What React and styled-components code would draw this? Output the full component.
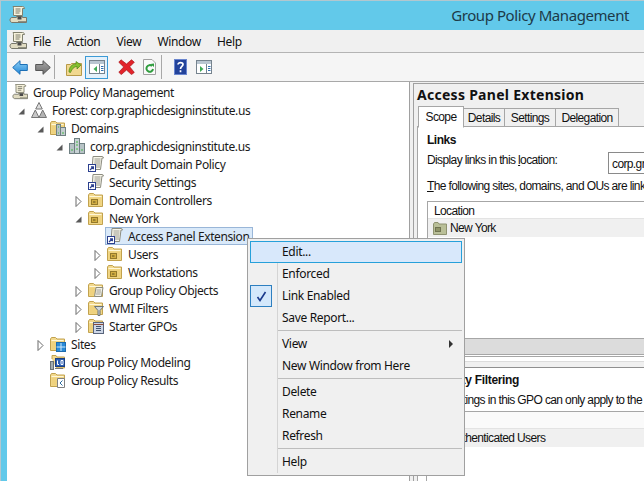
import React from "react";
import styled, { createGlobalStyle } from "styled-components";

const Global = createGlobalStyle`
  html, body { margin: 0; padding: 0; background: #fff; overflow: hidden; }
  * { box-sizing: border-box; }
`;

const Win = styled.div`
  width: 644px; height: 481px; display: flex; flex-direction: column;
  background: #62c9ea; border-top: 1px solid #b3c7cf; border-left: 1px solid #b3c7cf;
  overflow: hidden; font-family: "Noto Sans", "Open Sans", sans-serif; font-size: 12px; letter-spacing: -0.33px; color: #1a1a1a; position: relative;
`;
const TitleBar = styled.div`
  height: 29px; flex: none; display: flex; align-items: center; justify-content: space-between;
  padding: 0 15px 1px 8px;
`;
const TitleText = styled.span`font-size: 15px; letter-spacing: -0.42px; color: #1d3a48;`;
const Body = styled.div`
  flex: 1; min-height: 0; margin-left: 6px; background: #f0f0f0; display: flex; flex-direction: column;
`;
const MenuBar = styled.div`
  height: 23px; flex: none; display: flex; align-items: center; padding-left: 2px; gap: 16px; border-bottom: 1px solid #b4b4b4;
  & > svg { margin-right: -10px; }
`;
const MenuLabel = styled.span`color: #111;`;
const Toolbar = styled.div`
  height: 29px; flex: none; display: flex; align-items: center; padding-left: 1px; background: #f5f5f5; border-bottom: 1px solid #a8a8a8;
`;
const ToolBtn = styled.div`
  width: 23px; height: 23px; display: flex; align-items: center; justify-content: center; flex: none;
  border: 1px solid ${p => (p.$active ? "#3c9bd6" : "transparent")};
  background: ${p => (p.$active ? "#e4f1fb" : "transparent")};
`;
const ToolSep = styled.div`width: 1px; height: 24px; background: #a8a8a8; margin-right: 7px; flex: none;`;
const ToolGap = styled.div`width: 7px; flex: none;`;
const Content = styled.div`flex: 1; min-height: 0; display: flex; background: #f0f0f0;`;
const TreePane = styled.div`
  width: 403px; flex: none; background: #fff; padding-top: 1px; border-right: 1px solid #a0a0a0; overflow: hidden; letter-spacing: -0.39px;
`;
const Row = styled.div`
  height: 18px; display: flex; align-items: center; white-space: nowrap; padding-left: ${p => 5 + p.$d * 19}px;
`;
const RowInner = styled.div`
  display: flex; align-items: center; gap: 5px; height: 18px;
  padding: 0 ${p => (p.$sel ? 3 : 0)}px 0 ${p => (p.$sel ? 1 : 0)}px;
  margin-left: ${p => (p.$sel ? -2 : 0)}px;
  background: ${p => (p.$sel ? "#d9e9f9" : "transparent")};
  border: ${p => (p.$sel ? "1px solid #99b6d8" : "none")};
`;
const Exp = styled.span`
  width: 14px; margin-left: -17px; margin-right: 3px; flex: none; display: flex; justify-content: center; padding-top: 2px;
`;
const RightPane = styled.div`
  flex: 1; min-width: 0; margin: 1px 0 0 3px; border-left: 1px solid #a0a0a0; border-top: 1px solid #a0a0a0; background: #f0f0f0;
  display: flex; flex-direction: column; overflow: hidden; font-family: "Liberation Sans", Arial, sans-serif; color: #111; letter-spacing: -0.62px;
`;
const PaneTitle = styled.div`
  height: 22px; flex: none; padding: 2px 0 0 3px; font-family: "Noto Sans", sans-serif; font-weight: 700; font-size: 14px; letter-spacing: 0.28px; line-height: 18px; color: #111; white-space: nowrap;
`;
const Tabs = styled.div`display: flex; height: 21px; flex: none; padding-left: 4px; align-items: flex-start; position: relative; z-index: 1;`;
const Tab = styled.div`
  height: ${p => (p.$on ? 22 : 19)}px; width: ${p => p.$w}px; flex: none; border: 1px solid #a6a6a6;
  margin: ${p => (p.$on ? "0" : "2px 0 0 -1px")};
  border-bottom: ${p => (p.$on ? "1px solid #fff" : "1px solid #a6a6a6")};
  background: ${p => (p.$on ? "#fff" : "#f0f0f0")}; display: flex; align-items: center; justify-content: center; padding-top: ${p => (p.$on ? 0 : 1)}px;
`;
const TabBody = styled.div`
  margin: -1px 0 0 3px; flex: 1; min-height: 0; background: #fff; border-left: 1px solid #a6a6a6; border-top: 1px solid #a6a6a6; padding: 6px 0 0 9px; white-space: nowrap;
  display: flex; flex-direction: column; overflow: hidden;
`;
const Bold = styled.div`font-weight: 700; height: 15px; line-height: 14px; letter-spacing: -0.5px; flex: none;`;
const LinkLoc = styled.div`display: flex; height: 25px; flex: none; margin-top: 3px; align-items: flex-start;`;
const LinkLabel = styled.span`width: 181px; flex: none; margin-top: 2px; line-height: 14px;`;
const Combo = styled.div`
  width: 60px; height: 22px; flex: none; margin-top: 1px; border: 1px solid #8a8a8a; padding: 4px 0 0 3px; overflow: hidden; line-height: 14px;
`;
const Plain = styled.div`height: 18px; flex: none; margin-top: 1px; line-height: 18px;`;
const ListBox = styled.div`
  margin-top: 6px; height: 156px; flex: none; border: 1px solid #a6a6a6; border-right: none; background: #fff; padding-bottom: 1px; display: flex; flex-direction: column;
`;
const ListHead = styled.div`height: 17px; flex: none; border-bottom: 1px solid #e3e3e3; padding-left: 6px; line-height: 18px;`;
const ListRow = styled.div`height: 18px; flex: none; background: #f0f0f0; display: flex; align-items: center; gap: 3px; padding-left: 5px;`;
const GrayBar = styled.div`
  height: 17px; flex: none; margin-top: auto; background: #dcdcdc; border-top: 1px solid #a6a6a6; border-bottom: 1px solid #a6a6a6;
`;
const Splitter = styled.div`
  height: 6px; flex: none; margin: 4px 0 0 -1px; background: #f0f0f0; border-top: 1px solid #dcdcdc;
`;
const SecPanel = styled.div`
  flex: 1; margin-left: -1px; border-top: 1px solid #8f8f8f; border-left: 1px solid #a6a6a6; background: #fff; display: flex; flex-direction: column; padding-top: 4px; white-space: nowrap;
`;
const SecTitle = styled.div`font-weight: 700; font-size: 12px; letter-spacing: -0.33px; height: 16px; line-height: 16px;`;
const SecNote = styled.div`height: 16px; line-height: 16px; margin-top: 4px;`;
const SecHead = styled.div`height: 18px; margin-top: 3px; border-top: 1px solid #a6a6a6; background: #fafafa; border-bottom: 1px solid #e3e3e3;`;
const SecRow = styled.div`height: 18px; background: #f0f0f0; line-height: 19px; padding-left: 22px;`;
const Menu = styled.div`
  position: absolute; left: 246px; top: 237px; width: 218px; height: 238px; padding: 2px; background: #f0f0f0; border: 1px solid #a0a0a0; color: #111; letter-spacing: -0.33px;
  &::before { content: ""; position: absolute; left: 29px; top: 24px; bottom: 2px; width: 1px; background: #d4d4d4; }
`;
const Item = styled.div`
  height: 22px; padding-left: 31px; display: flex; align-items: center; justify-content: space-between; position: relative; border: 1px solid ${p => (p.$hot ? "#26a0da" : "transparent")};
  background: ${p => (p.$hot ? "#d8e8fb" : "transparent")};
  line-height: 20px;
`;
const CheckBox = styled.span`
  position: absolute; left: -1px; top: -1px; width: 22px; height: 22px; border: 1px solid #2d7fc0; background: #d4e8fb; display: flex; align-items: center; justify-content: center;
`;
const Sub = styled.span`width: 0; height: 0; border-left: 4px solid #333; border-top: 4px solid transparent; border-bottom: 4px solid transparent; margin-right: 8px;`;
const MenuSep = styled.div`height: 4px; padding: 1px 0 0 28px;`;
const MenuLine = styled.div`height: 1px; background: #bdbdbd;`;

const Scroll = ({ s = 18 }) => (
  <svg width={s} height={s} viewBox="0 0 18 18">
    <path d="M4 .5h9.500c1.300 0 2 1 2 2h-2v7H4.500V2.500C4.500 1.500 4.300 .8 4 .5z" fill="#f7f2dc" stroke="#80806e" />
    <path d="M6.500 3h5M6.500 5h5M6.500 7h4" stroke="#7a7a6a" />
    <path d="M1 14c0-1.300.8-2.500 2-2.500h4.500v-1h6v1h4v5H3c-1 0-2-1.200-2-2.500z" fill="#e1dcc2" stroke="#77776a" />
    <path d="M8.500 10.500h4v3h-4z" fill="#4a4a4a" />
    <path d="M9 15.500h8" stroke="#8f8f80" />
  </svg>
);
const Forest = () => (
  <svg width="16" height="16" viewBox="0 0 16 16">
    <path d="M8 .5l3.300 6.500H4.700z" fill="#dcdcdc" stroke="#777" />
    <path d="M4.300 8l3.700 7.500H.5z" fill="#c8c8c8" stroke="#777" />
    <path d="M11.700 8l3.800 7.500H8z" fill="#b4b4b4" stroke="#777" />
  </svg>
);
const Folder = ({ children }) => (
  <svg width="16" height="16" viewBox="0 0 16 16">
    <path d="M.5 14.500V3L1.500 1.500h4L7 3h7.500v11.500z" fill="#f2d98e" stroke="#c2a24e" />
    <path d="M1.500 4.500h12" stroke="#fff7d8" />
    <path d="M1.500 5.500h12v8h-12z" fill="#efd27e" />
    {children}
  </svg>
);
const OU = () => (
  <Folder>
    <rect x="3.500" y="7.500" width="6" height="5" fill="#d3ae42" stroke="#94792a" />
    <path d="M5 10h2.500" stroke="#5e5020" />
  </Folder>
);
const DomainsIcon = () => (
  <Folder>
    <rect x="6.500" y="4.500" width="4" height="11" fill="#b7c3c6" stroke="#6f8082" />
    <rect x="10.500" y="7.500" width="5" height="8" fill="#c5ced0" stroke="#6f8082" />
    <path d="M8 13h1M12 13h2M8 7h1" stroke="#46b946" />
  </Folder>
);
const Domain = () => (
  <svg width="16" height="16" viewBox="0 0 16 16">
    <rect x=".5" y="5.500" width="5" height="10" fill="#b7c3c6" stroke="#6f8082" />
    <rect x="5.500" y=".5" width="5" height="15" fill="#c7d1d4" stroke="#6f8082" />
    <rect x="10.500" y="5.500" width="5" height="10" fill="#b7c3c6" stroke="#6f8082" />
    <path d="M2 12h2M7 11h2M12 12h2M7 4h2M7 7h2" stroke="#46b946" />
  </svg>
);
const Gpo = () => (
  <svg width="16" height="16" viewBox="0 0 16 16">
    <path d="M5 .5h9c1 0 1.500.5 1.500 1.500h-1.500L12.500 13.500H4z" fill="#f8f6ea" stroke="#8c8c80" />
    <path d="M6.500 3h6M6.500 5h6M6.300 7h6M6 9h6M8 11h4" stroke="#9a9a90" />
    <rect x=".5" y="8.500" width="7" height="7" fill="#fff" stroke="#2b3f8e" />
    <path d="M2 14l3-3M3 10.800h2.400v2.400" stroke="#2b3f8e" fill="none" strokeWidth="1.200" />
  </svg>
);
const GpoFolder = () => (
  <Folder>
    <path d="M8 5.500h7l-1.500 9H6.500z" fill="#f3f1e4" stroke="#8c8c80" />
    <path d="M8.500 8h4.500M8.500 10h4.500M8 12h4.500" stroke="#a0a098" />
  </Folder>
);
const Wmi = () => (
  <Folder>
    <path d="M6.500 6.500h9l-3.500 4v5h-2v-5z" fill="#cfd6da" stroke="#6b7478" />
  </Folder>
);
const Starter = () => (
  <Folder>
    <rect x="5.500" y="4.500" width="10" height="11" fill="#cdd6e6" stroke="#59657c" />
    <path d="M5.500 6.500h10" stroke="#8a4b3a" />
    <path d="M8 8.500h5M8 10.500h5M8 12.500h5" stroke="#42536f" />
  </Folder>
);
const Sites = () => (
  <Folder>
    <rect x="6.500" y="6.500" width="9" height="9" fill="#2a8bd8" stroke="#1e6cae" />
    <path d="M11 7v8M6.500 11h9" stroke="#cfe9fb" />
  </Folder>
);
const Modeling = () => (
  <svg width="16" height="16" viewBox="0 0 16 16">
    <path d="M2 5V1.500h4l1 1.500h7.500v11H6" fill="#f2d98e" stroke="#c2a24e" />
    <rect x=".5" y="7.500" width="3" height="8" fill="#a4adb0" stroke="#6a7275" />
    <rect x="5.500" y="4.500" width="9" height="8" fill="#2b5fb3" stroke="#1c3f80" />
    <path d="M7.500 6.500v4h1.500M11 6.500h2v4h-2z" stroke="#fff" fill="none" />
    <path d="M5 14.500h8" stroke="#777" />
  </svg>
);
const Results = () => (
  <Folder>
    <path d="M7.500 6.500h7v9h-7z" fill="#fff" stroke="#808080" />
    <path d="M12.500 8.500L10 11l2.500 2.500" stroke="#2b6b9e" fill="none" />
  </Folder>
);

const Arrow = ({ open }) => (
  <Exp>
    {open ? (
      <svg width="7" height="7" viewBox="0 0 7 7"><path d="M6.500 .5v6H.5z" fill="#595959" /></svg>
    ) : (
      <svg width="7" height="11" viewBox="0 0 7 11"><path d="M1 .5L6 5.500 1 10.500z" fill="#fff" stroke="#6a6a6a" /></svg>
    )}
  </Exp>
);

const TreeRow = ({ d, exp, icon, label, sel }) => (
  <Row $d={d}>
    {exp && <Arrow open={exp === "open"} />}
    <RowInner $sel={sel}>{icon}<span>{label}</span></RowInner>
  </Row>
);

const rows = [
  { d: 0, icon: <Scroll s={16} />, label: "Group Policy Management" },
  { d: 1, exp: "open", icon: <Forest />, label: "Forest: corp.graphicdesigninstitute.us" },
  { d: 2, exp: "open", icon: <DomainsIcon />, label: "Domains" },
  { d: 3, exp: "open", icon: <Domain />, label: "corp.graphicdesigninstitute.us" },
  { d: 4, icon: <Gpo />, label: "Default Domain Policy" },
  { d: 4, icon: <Gpo />, label: "Security Settings" },
  { d: 4, exp: "closed", icon: <OU />, label: "Domain Controllers" },
  { d: 4, exp: "open", icon: <OU />, label: "New York" },
  { d: 5, icon: <Gpo />, label: "Access Panel Extension", sel: true },
  { d: 5, exp: "closed", icon: <OU />, label: "Users" },
  { d: 5, exp: "closed", icon: <OU />, label: "Workstations" },
  { d: 4, exp: "closed", icon: <GpoFolder />, label: "Group Policy Objects" },
  { d: 4, exp: "closed", icon: <Wmi />, label: "WMI Filters" },
  { d: 4, exp: "closed", icon: <Starter />, label: "Starter GPOs" },
  { d: 2, exp: "closed", icon: <Sites />, label: "Sites" },
  { d: 2, icon: <Modeling />, label: "Group Policy Modeling" },
  { d: 2, icon: <Results />, label: "Group Policy Results" },
];

const Back = () => (
  <svg width="16" height="15" viewBox="0 0 16 15">
    <defs>
      <linearGradient id="bk" x1="0" y1="0" x2="0" y2="1">
        <stop offset="0" stopColor="#8fd0f5" />
        <stop offset="1" stopColor="#1f86d8" />
      </linearGradient>
    </defs>
    <path d="M.7 7.500L8 .7v3.800h7.300v6H8v3.800z" fill="url(#bk)" stroke="#1c6fb6" />
  </svg>
);
const Fwd = () => (
  <svg width="16" height="15" viewBox="0 0 16 15">
    <defs>
      <linearGradient id="fw" x1="0" y1="0" x2="0" y2="1">
        <stop offset="0" stopColor="#a8a8a8" />
        <stop offset="1" stopColor="#6c6c6c" />
      </linearGradient>
    </defs>
    <path d="M15.300 7.500L8 .7v3.800H.7v6H8v3.800z" fill="url(#fw)" stroke="#555" />
  </svg>
);
const Up = () => (
  <svg width="16" height="17" viewBox="0 0 16 17">
    <path d="M.5 16.500V5.500h4l1-1h10v12z" fill="#f1d88f" stroke="#b89a48" />
    <path d="M3 13c0-5 3-8 7-8V2.500l5 3.500-4 4V7.500c-3 0-5 2.500-6.500 6z" fill="#86c02e" stroke="#4f8518" strokeWidth=".7" />
  </svg>
);
const Pane = ({ right }) => (
  <svg width="16" height="14" viewBox="0 0 16 14">
    <rect x=".5" y=".5" width="15" height="13" fill="#fff" stroke="#76838e" />
    <rect x="1" y="1" width="14" height="3" fill="#b9c6d1" />
    <path d="M10.500 4v9.500" stroke="#76838e" />
    {right ? <path d="M4 6l3.500 3L4 12z" fill="#3eaa55" /> : <path d="M8 6L4.500 9 8 12z" fill="#3eaa55" />}
    <path d="M12 6.500h2.500M12 8.500h2.500M12 10.500h2.500" stroke="#2f6fb0" />
  </svg>
);
const Del = () => (
  <svg width="17" height="16" viewBox="0 0 17 16">
    <path d="M3 .8L8.500 5l5-4.200 2.800 2.400-4.600 4.600 4.600 5.600-2.800 2.200L8.500 11l-5.200 4.600L.8 13.200 5.700 8 .8 3.200z" fill="#e2232a" stroke="#a8141a" strokeWidth=".7" />
  </svg>
);
const Refresh = () => (
  <svg width="13" height="16" viewBox="0 0 13 16">
    <path d="M.5 .5h8.500l3.500 3.500v11.500H.5z" fill="#fafafa" stroke="#a0a0a0" />
    <path d="M10 10a3.300 3.300 0 1 1-1-3" fill="none" stroke="#2f9d3e" strokeWidth="2" />
    <path d="M7.500 5l3.500-.5V8z" fill="#2f9d3e" />
  </svg>
);
const Help = () => (
  <svg width="13" height="16" viewBox="0 0 13 16">
    <rect width="13" height="16" fill="#23439b" />
    <rect x=".5" y=".5" width="12" height="15" fill="none" stroke="#6a86cf" />
    <path d="M4 5.500C4 3 9 3 9 5.500 9 7.500 6.500 7.500 6.500 10M6.500 11.300v2" fill="none" stroke="#fff" strokeWidth="1.700" />
  </svg>
);
const Check = () => (
  <svg width="11" height="11" viewBox="0 0 11 11">
    <path d="M1.500 6l2.500 3.500L9.500 1" fill="none" stroke="#1b3a8c" strokeWidth="1.600" />
  </svg>
);
const DimFolder = () => (
  <svg width="14" height="13" viewBox="0 0 14 13">
    <path d="M.5 12.500V2l1-1.500h3.500L6 2h7.500v10.500z" fill="#b9bf98" stroke="#8e9270" />
    <rect x="2.500" y="5.500" width="5" height="4" fill="#8f9468" stroke="#6f7350" />
  </svg>
);

export default function App() {
  return (
    <>
      <Global />
      <Win>
        <TitleBar>
          <Scroll />
          <TitleText>Group Policy Management</TitleText>
        </TitleBar>
        <Body>
          <MenuBar>
            <Scroll />
            <MenuLabel>File</MenuLabel>
            <MenuLabel>Action</MenuLabel>
            <MenuLabel>View</MenuLabel>
            <MenuLabel>Window</MenuLabel>
            <MenuLabel>Help</MenuLabel>
          </MenuBar>
          <Toolbar>
            <ToolBtn><Back /></ToolBtn>
            <ToolBtn><Fwd /></ToolBtn>
            <ToolSep />
            <ToolBtn><Up /></ToolBtn>
            <ToolBtn $active><Pane /></ToolBtn>
            <ToolGap />
            <ToolBtn><Del /></ToolBtn>
            <ToolBtn><Refresh /></ToolBtn>
            <ToolSep />
            <ToolBtn><Help /></ToolBtn>
            <ToolBtn><Pane right /></ToolBtn>
          </Toolbar>
          <Content>
            <TreePane>
              {rows.map(r => <TreeRow key={r.label} {...r} />)}
            </TreePane>
            <RightPane>
              <PaneTitle>Access Panel Extension</PaneTitle>
              <Tabs>
                <Tab $on $w={46}>Scope</Tab>
                <Tab $w={42}>Details</Tab>
                <Tab $w={52}>Settings</Tab>
                <Tab $w={64}>Delegation</Tab>
              </Tabs>
              <TabBody>
                <Bold>Links</Bold>
                <LinkLoc>
                  <LinkLabel>Display links in this <u>l</u>ocation:</LinkLabel>
                  <Combo>corp.graphicdesign</Combo>
                </LinkLoc>
                <Plain><u>T</u>he following sites, domains, and OUs are linked to this GPO:</Plain>
                <ListBox>
                  <ListHead>Location</ListHead>
                  <ListRow><DimFolder />New York</ListRow>
                  <GrayBar />
                </ListBox>
                <Splitter />
                <SecPanel>
                  <SecTitle>Security Filtering</SecTitle>
                  <SecNote>The settings in this GPO can only apply to the following groups</SecNote>
                  <SecHead />
                  <SecRow>Authenticated Users</SecRow>
                </SecPanel>
              </TabBody>
            </RightPane>
          </Content>
        </Body>
        <Menu>
          <Item $hot>Edit...</Item>
          <Item>Enforced</Item>
          <Item><CheckBox><Check /></CheckBox>Link Enabled</Item>
          <Item>Save Report...</Item>
          <MenuSep><MenuLine /></MenuSep>
          <Item>View<Sub /></Item>
          <Item>New Window from Here</Item>
          <MenuSep><MenuLine /></MenuSep>
          <Item>Delete</Item>
          <Item>Rename</Item>
          <Item>Refresh</Item>
          <MenuSep><MenuLine /></MenuSep>
          <Item>Help</Item>
        </Menu>
      </Win>
    </>
  );
}
